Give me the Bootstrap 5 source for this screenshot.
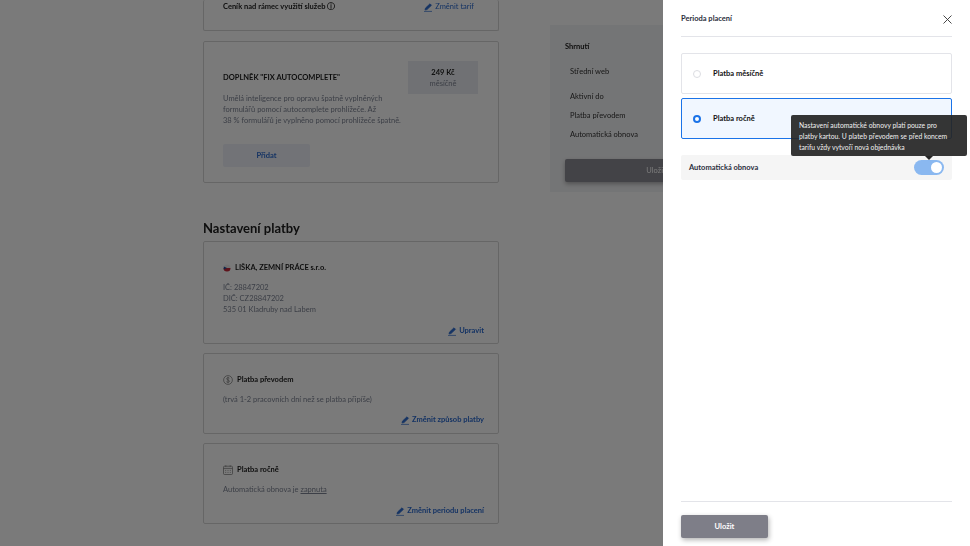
<!DOCTYPE html>
<html lang="cs">
<head>
  <meta charset="UTF-8">
  <title>Perioda placení</title>
  <link href="https://cdn.jsdelivr.net/npm/bootstrap@5.3.0/dist/css/bootstrap.min.css" rel="stylesheet">
  <style>
    html, body { height: 546px; overflow: hidden; }
    body { font-family: "Lato", "Open Sans", sans-serif; font-size: 7.5px; color: #222; background: #fff; }
    .stranka { width: 663px; height: 546px; padding-left: 203px; gap: 51px; filter: blur(.5px); }
    .sloupec { width: 296px; flex: none; }
    .box { border: 1px solid #d6d6d6; border-radius: 2px; background: #fff; padding: 0 14px 0 19px; }
    .box-top { height: 31px; border-top: 0; padding-top: 1px; margin-bottom: 10px; }
    .box-doplnek { height: 142px; padding-top: 19px; }
    .box-firma { height: 103px; padding-top: 20px; margin-bottom: 9px; }
    .box-platba { height: 81px; padding-top: 20px; margin-bottom: 9px; }
    .tucne { font-weight: 700; color: #1c1c1c; }
    .seda { color: #7e8494; line-height: 11px; }
    .modra { color: #2c6bd0; font-weight: 700; }
    .odkaz-tarif { padding-right: 10px; font-weight: 400; }
    .cena { width: 70px; height: 33px; margin-right: 6px; background: #eaedf2; text-align: center; line-height: 10px; padding-top: 7px; }
    .doplnek-titul { padding-top: 11px; }
    .doplnek-text { margin: -1px 0 18px; line-height: 11px; }
    .btn-pridat { display: block; width: 87px; height: 23px; background: #eef1f8; border: 0; border-radius: 2px; font-size: 7.5px; font-weight: 700; color: #2c6bd0; padding: 0; }
    .nadpis { font-size: 13px; font-weight: 700; color: #202020; margin: 37px 0 0; height: 21px; line-height: 16px; }
    .firma-udaje { margin-top: 9px; }
    .odkaz-a { margin-top: 9px; }
    .odkaz-b { margin-top: 10px; }
    .radek-hlava { margin-bottom: 9px; }
    .shrnuti { flex: none; width: 130px; height: 167px; margin-top: 25px; background: #f3f4f6; padding: 16px 0 0 15px; }
    .shrnuti-radek { padding-left: 5px; color: #333; margin-top: 9px; line-height: 10px; }
    .shrnuti-web { margin-top: 15px; margin-bottom: 15px; }
    .btn-tmava { width: 140px; height: 23px; margin-top: 19px; background: #8c8c94; color: #fff; border: 0; border-radius: 2px; font-size: 7.5px; box-shadow: 0 2px 4px rgba(0,0,0,.3); padding: 0 0 0 42px; }
    .clona { position: fixed; inset: 0; background: rgba(0,0,0,.52); }
    .panel { position: fixed; top: 0; right: 0; width: 307px; height: 546px; background: #fff; padding: 0 18px 8px; }
    .panel-hlava { height: 37px; padding-top: 2px; border-bottom: 1px solid #e3e4e9; font-weight: 700; color: #2a2d3c; }
    .volba { height: 41px; border: 1px solid #e3e4e9; border-radius: 2px; padding-left: 11px; font-weight: 700; color: #111; gap: 12px; }
    .volba-aktivni { border-color: #1a73e8; background: #f1f7ff; }
    .kruh { width: 8px; height: 8px; border-radius: 50%; border: 1px solid #dcdde2; background: #fff; }
    .kruh-aktivni { border: 2.5px solid #1a73e8; }
    .obnova { height: 25px; background: #f5f5f5; border-radius: 2px; padding: 0 8px; font-weight: 700; color: #2a2d3c; }
    .prepinac { width: 30px; height: 15px; border-radius: 8px; background: #8ab8f0; padding: 2px; }
    .prepinac span { width: 11px; height: 11px; border-radius: 50%; background: #fff; }
    .napoveda { position: absolute; top: 115px; left: 128px; width: 176px; height: 41px; background: rgba(38,38,38,.93); color: #f0f0f0; border-radius: 2px; padding: 5px 8px; line-height: 11px; font-size: 6.8px; white-space: nowrap; }
    .napoveda::after { content: ""; position: absolute; left: 134px; bottom: -4px; border: 4px solid transparent; border-bottom: 0; border-top-color: #262626; }
    .panel-pata { border-top: 1px solid #e3e4e9; padding-top: 13px; }
    .btn-ulozit { display: block; width: 87px; height: 23px; background: #7e7e88; color: #fff; border: 0; border-radius: 2px; font-size: 7.5px; font-weight: 700; box-shadow: 1px 2px 5px rgba(0,0,0,.3); padding: 0; }
    svg { flex: none; }
  </style>
</head>
<body>
  <div class="stranka d-flex">
    <div class="sloupec">
      <div class="box box-top d-flex justify-content-between">
        <span class="tucne">Ceník nad rámec využití služeb ⓘ</span>
        <a class="modra odkaz-tarif text-decoration-none">
          <svg width="9" height="9" viewBox="0 0 9 9"><path d="M1 7l.5-2L6 .8l1.5 1.5L3 6.6z M0 8.4h8" fill="#2c6bd0" stroke="#2c6bd0" stroke-width=".7"/></svg>
          Změnit tarif</a>
      </div>

      <div class="box box-doplnek">
        <div class="d-flex justify-content-between">
          <div class="tucne doplnek-titul">DOPLNĚK "FIX AUTOCOMPLETE"</div>
          <div class="cena"><div class="tucne">249 Kč</div><div class="seda">měsíčně</div></div>
        </div>
        <p class="seda doplnek-text">Umělá inteligence pro opravu špatně vyplněných<br>formulářů pomocí autocomplete prohlížeče. Až<br>38 % formulářů je vyplněno pomocí prohlížeče špatně.</p>
        <button class="btn-pridat">Přidat</button>
      </div>

      <h2 class="nadpis">Nastavení platby</h2>

      <div class="box box-firma">
        <div class="tucne d-flex align-items-center gap-1">
          <svg width="8" height="8" viewBox="0 0 8 8"><circle cx="4" cy="4" r="3.5" fill="#eee"/><path d="M.5 4h7A3.5 3.5 0 0 1 .5 4z" fill="#c6283a"/><path d="M.8 2.4L4 4 .8 5.6z" fill="#1f4c9a"/></svg>
          LIŠKA, ZEMNÍ PRÁCE s.r.o.
        </div>
        <div class="seda firma-udaje">IČ: 28847202</div>
        <div class="seda">DIČ: CZ28847202</div>
        <div class="seda">535 01 Kladruby nad Labem</div>
        <div class="text-end modra odkaz-b">
          <svg width="9" height="9" viewBox="0 0 9 9"><path d="M1 7l.5-2L6 .8l1.5 1.5L3 6.6z M0 8.4h8" fill="#2c6bd0" stroke="#2c6bd0" stroke-width=".7"/></svg>
          Upravit</div>
      </div>

      <div class="box box-platba">
        <div class="tucne d-flex align-items-center gap-1 radek-hlava">
          <svg width="10" height="10" viewBox="0 0 10 10" fill="none" stroke="#777" stroke-width=".7"><circle cx="5" cy="5" r="4.4"/><path d="M6.4 3.2C5.6 2.4 3.6 2.6 3.6 3.8S6.5 5 6.5 6.2 4.3 7.6 3.4 6.7M5 1.8v6.4"/></svg>
          Platba převodem
        </div>
        <div class="seda">(trvá 1-2 pracovních dní než se platba připíše)</div>
        <div class="text-end modra odkaz-a">
          <svg width="9" height="9" viewBox="0 0 9 9"><path d="M1 7l.5-2L6 .8l1.5 1.5L3 6.6z M0 8.4h8" fill="#2c6bd0" stroke="#2c6bd0" stroke-width=".7"/></svg>
          Změnit způsob platby</div>
      </div>

      <div class="box box-platba">
        <div class="tucne d-flex align-items-center gap-1 radek-hlava">
          <svg width="10" height="10" viewBox="0 0 10 10" fill="none" stroke="#777" stroke-width=".7"><rect x=".5" y="1.2" width="9" height="8.3" rx="1"/><path d="M.5 3.4h9M2.8.3v1.6M7.2.3v1.6M2.2 5.4h1M4.5 5.4h1M6.8 5.4h1M2.2 7.4h1M4.5 7.4h1M6.8 7.4h1"/></svg>
          Platba ročně
        </div>
        <div class="seda">Automatická obnova je <u>zapnuta</u></div>
        <div class="text-end modra odkaz-b">
          <svg width="9" height="9" viewBox="0 0 9 9"><path d="M1 7l.5-2L6 .8l1.5 1.5L3 6.6z M0 8.4h8" fill="#2c6bd0" stroke="#2c6bd0" stroke-width=".7"/></svg>
          Změnit periodu placení</div>
      </div>
    </div>

    <div class="shrnuti">
      <div class="tucne">Shrnutí</div>
      <div class="shrnuti-radek shrnuti-web">Střední web</div>
      <div class="shrnuti-radek">Aktivní do</div>
      <div class="shrnuti-radek">Platba převodem</div>
      <div class="shrnuti-radek">Automatická obnova</div>
      <button class="btn-tmava">Uložit</button>
    </div>
  </div>

  <div class="clona"></div>

  <aside class="panel d-flex flex-column">
    <div class="panel-hlava d-flex justify-content-between align-items-center">
      <span>Perioda placení</span>
      <svg width="9" height="9" viewBox="0 0 9 9" stroke="#333" stroke-width=".9"><path d="M.5.5l8 8M8.5.5l-8 8"/></svg>
    </div>

    <div class="volba d-flex align-items-center mt-3 mb-1">
      <span class="kruh"></span>Platba měsíčně
    </div>
    <div class="volba volba-aktivni d-flex align-items-center">
      <span class="kruh kruh-aktivni"></span>Platba ročně
    </div>

    <div class="obnova d-flex justify-content-between align-items-center mt-3">
      <span>Automatická obnova</span>
      <div class="prepinac d-flex justify-content-end"><span></span></div>
    </div>

    <div class="napoveda">Nastavení automatické obnovy platí pouze pro<br>platby kartou. U plateb převodem se před koncem<br>tarifu vždy vytvoří nová objednávka</div>

    <div class="panel-pata mt-auto">
      <button class="btn-ulozit">Uložit</button>
    </div>
  </aside>

<script src="https://cdn.jsdelivr.net/npm/bootstrap@5.3.0/dist/js/bootstrap.bundle.min.js"></script>
</body>
</html>
